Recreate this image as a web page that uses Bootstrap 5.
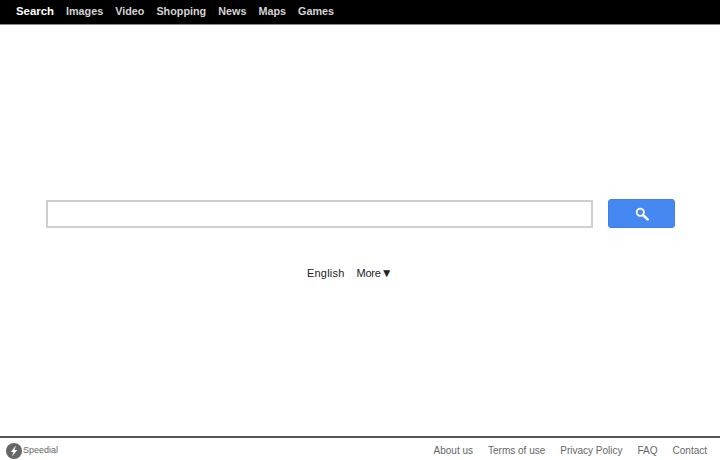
<!DOCTYPE html>
<html lang="en">
<head>
<meta charset="utf-8">
<title>Search</title>
<link rel="stylesheet" href="https://cdn.jsdelivr.net/npm/bootstrap@5.3.0/dist/css/bootstrap.min.css">
<style>
html, body { height: 100%; }
body { font-family: "Liberation Sans", Arial, sans-serif; background: #fff; overflow: hidden; }
.top-strip { height: 25px; background: #000; border-bottom: 1px solid #8a8a8a; padding: 0 0 2px 16px; gap: 12px; }
.top-strip a { color: #d4d4d4; font-size: 10.8px; font-weight: 700; text-decoration: none; line-height: 22px; }
.top-strip a.on { color: #fff; font-size: 11.4px; }
.page-main { height: 411px; padding-top: 174px; }
.search-row { padding-left: 46px; padding-right: 45px; gap: 15px; height: 29px; }
.search-box { width: 547px; height: 28px; min-height: 0; border: 2px solid #cfcfcf; border-radius: 0; padding: 0 6px; align-self: flex-end; }
.search-box:focus { box-shadow: none; border-color: #cfcfcf; }
.search-go { width: 67px; height: 29px; background: #4688f1; border: 1px solid #3f7fe8; border-radius: 3px; padding: 0; }
.search-go:hover { background: #4688f1; }
.lang-row { margin-top: 37px; padding-left: 307px; gap: 12px; font-size: 11px; line-height: 16px; color: #222; }
.lang-row span.eng { letter-spacing: .2px; }
.more-word { letter-spacing: -.2px; }
.more-arrow { font-size: 12px; }
.bottom-strip { height: 25px; border-top: 2px solid #555; padding: 2px 13px 0 6px; }
.brand-name { font-size: 9px; color: #666; margin-left: 1px; }
.foot-links { gap: 15px; }
.foot-links a { font-size: 10px; color: #666; text-decoration: none; }
</style>
</head>
<body>
<nav class="top-strip d-flex align-items-center">
<a class="on" href="#">Search</a>
<a href="#">Images</a>
<a href="#">Video</a>
<a href="#">Shopping</a>
<a href="#">News</a>
<a href="#">Maps</a>
<a href="#">Games</a>
</nav>
<main class="page-main">
<form class="search-row d-flex align-items-center">
<input class="form-control search-box" type="text" aria-label="Search">
<button class="btn search-go d-flex align-items-center justify-content-center" type="button" aria-label="Search">
<svg width="14" height="14" viewBox="0 0 14 14"><circle cx="5.3" cy="5.3" r="3.6" fill="none" stroke="#fff" stroke-width="1.8"/><path d="M8.2 8.2 12.6 12.4" stroke="#fff" stroke-width="2.6" stroke-linecap="round"/></svg>
</button>
</form>
<div class="lang-row d-flex align-items-center">
<span class="eng">English</span>
<span><span class="more-word">More</span><span class="more-arrow">▼</span></span>
</div>
</main>
<footer class="bottom-strip d-flex align-items-center justify-content-between">
<div class="d-flex align-items-center">
<svg width="16" height="16" viewBox="0 0 16 16"><circle cx="8" cy="8" r="8" fill="#666"/><path d="M10 2.5 4.8 9h2.7L6 13.5 11.2 7H8.5z" fill="#fff"/></svg>
<span class="brand-name">Speedial</span>
</div>
<div class="foot-links d-flex">
<a href="#">About us</a>
<a href="#">Terms of use</a>
<a href="#">Privacy Policy</a>
<a href="#">FAQ</a>
<a href="#">Contact</a>
</div>
</footer>
<script src="https://cdn.jsdelivr.net/npm/bootstrap@5.3.0/dist/js/bootstrap.bundle.min.js"></script>
</body>
</html>
